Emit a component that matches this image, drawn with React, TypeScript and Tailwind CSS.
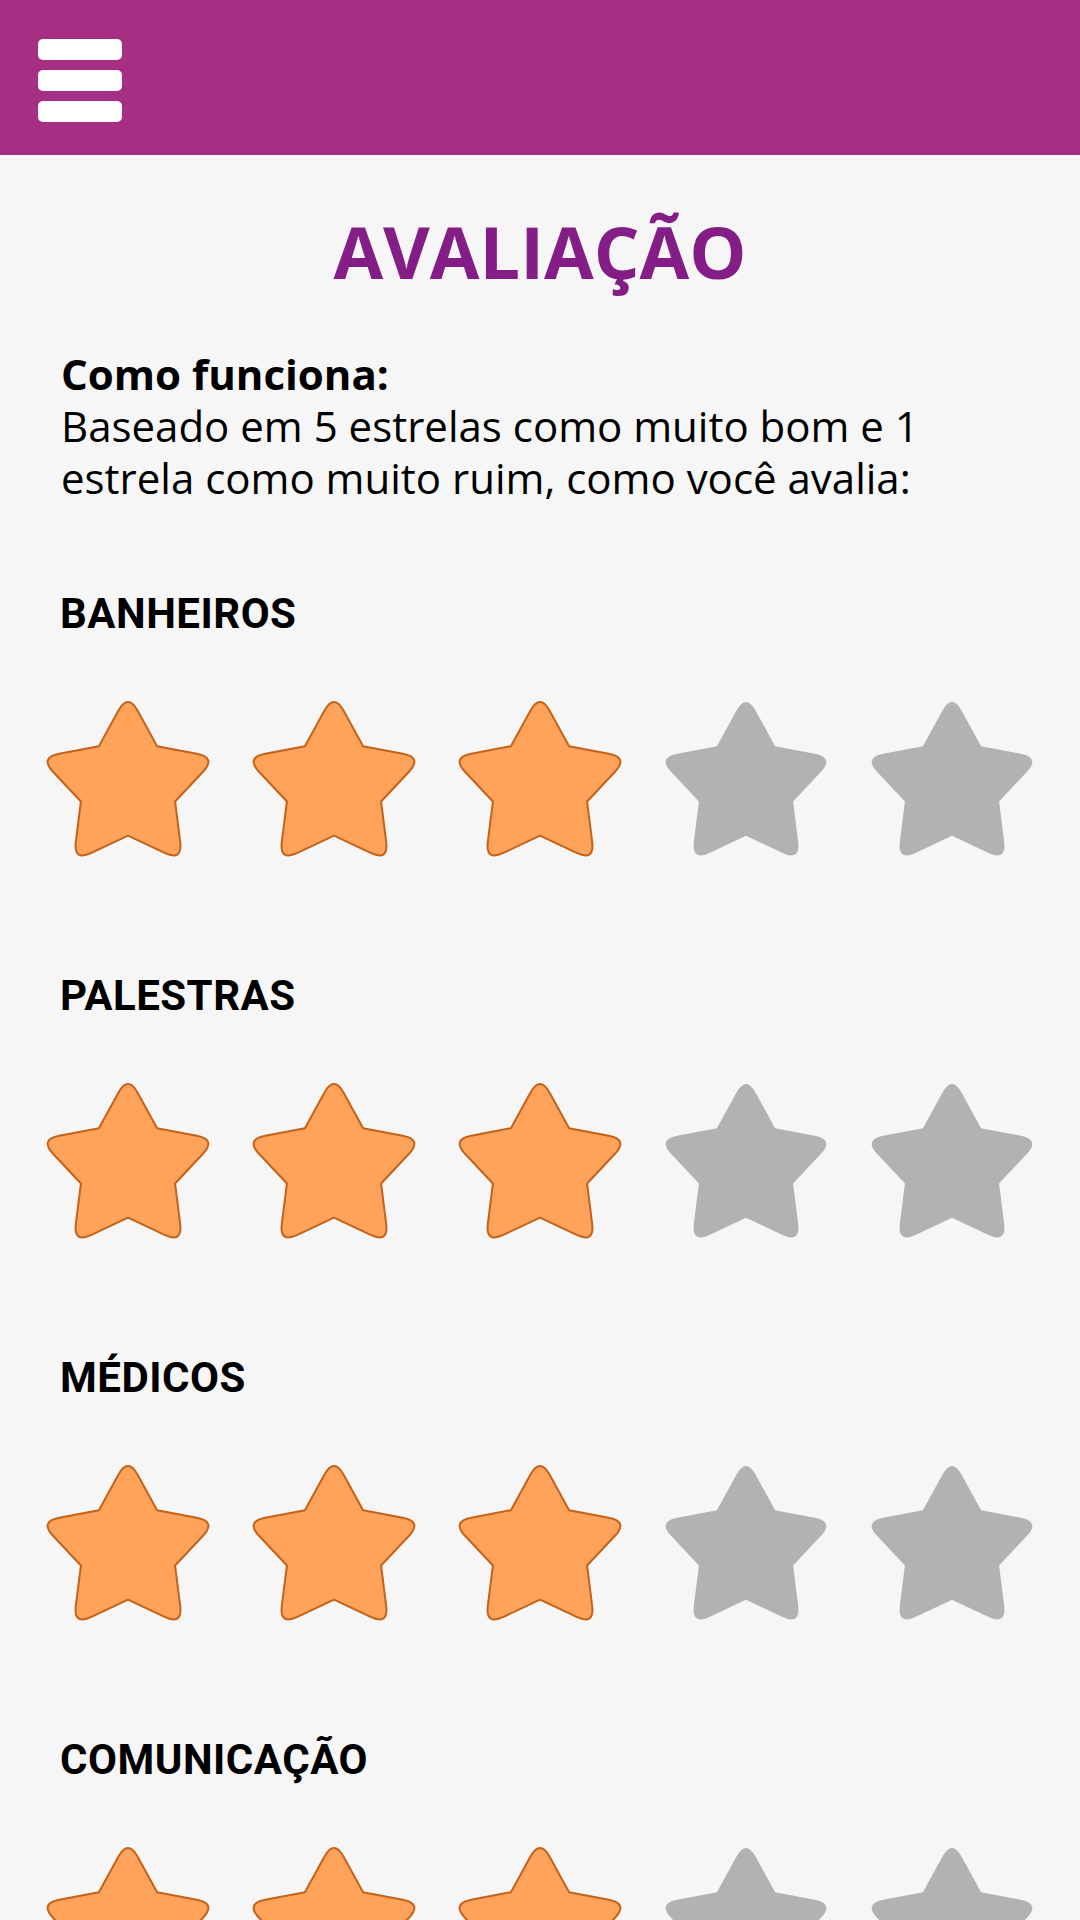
import React from "react";

// gera o caminho de uma estrela com pontas arredondadas
function starPath(cx: number, cy: number, R: number, r: number, round: number) {
  const pts: [number, number][] = [];
  for (let i = 0; i < 10; i++) {
    const ang = ((-90 + i * 36) * Math.PI) / 180;
    const rad = i % 2 === 0 ? R : r;
    pts.push([cx + rad * Math.cos(ang), cy + rad * Math.sin(ang)]);
  }
  const f = (n: number) => n.toFixed(2);
  let d = "";
  for (let i = 0; i < 10; i++) {
    const p = pts[i];
    if (i % 2 === 0) {
      const prev = pts[(i + 9) % 10];
      const next = pts[(i + 1) % 10];
      const len = Math.hypot(p[0] - prev[0], p[1] - prev[1]);
      const t = round / len;
      const a = [p[0] + (prev[0] - p[0]) * t, p[1] + (prev[1] - p[1]) * t];
      const b = [p[0] + (next[0] - p[0]) * t, p[1] + (next[1] - p[1]) * t];
      d += `${i === 0 ? "M" : "L"}${f(a[0])} ${f(a[1])} Q${f(p[0])} ${f(p[1])} ${f(b[0])} ${f(b[1])} `;
    } else {
      d += `L${f(p[0])} ${f(p[1])} `;
    }
  }
  return d + "Z";
}

const STAR = starPath(80, 84.2, 93, 49.5, 20);

function Star({ filled }: { filled: boolean }) {
  return (
    <svg width="160" height="152" viewBox="0 0 160 152" className="overflow-visible">
      {filled ? (
        <path d={STAR} fill="#ffa25a" stroke="#c4621a" strokeWidth="2" strokeLinejoin="round" />
      ) : (
        <path d={STAR} fill="#b2b2b2" />
      )}
    </svg>
  );
}

const categorias = [
  { nome: "BANHEIROS", nota: 3 },
  { nome: "PALESTRAS", nota: 3 },
  { nome: "MÉDICOS", nota: 3 },
  { nome: "COMUNICAÇÃO", nota: 3 },
];

export default function App() {
  return (
    <div className="w-[1080px] h-[1920px] overflow-hidden bg-[#f6f6f6]">
      {/* Barra superior */}
      <div className="h-[155px] bg-[#a72f83] pt-[39px] pl-[38px]">
        <div className="flex flex-col gap-[10px] w-[84px]">
          <div className="h-[21px] rounded-[5px] bg-white" />
          <div className="h-[21px] rounded-[5px] bg-white" />
          <div className="h-[21px] rounded-[5px] bg-white" />
        </div>
      </div>

      <h1
        className="mt-[60px] text-center text-[72px] leading-[72px] font-bold text-[#841e86]"
        style={{ fontFamily: '"Open Sans", sans-serif' }}
      >
        AVALIAÇÃO
      </h1>

      <div
        className="mt-[61px] px-[61px] text-[42px] leading-[52px] text-black"
        style={{ fontFamily: '"Open Sans", sans-serif' }}
      >
        <p className="font-bold">Como funciona:</p>
        <p>Baseado em 5 estrelas como muito bom e 1 estrela como muito ruim, como você avalia:</p>
      </div>

      <div className="mt-[89px]">
        {categorias.map((c) => (
          <div key={c.nome} className="pb-[121px]">
            <h2
              className="px-[60px] text-[42px] leading-[42px] font-bold tracking-[0.5px] text-black"
              style={{ fontFamily: "Roboto, sans-serif" }}
            >
              {c.nome}
            </h2>
            <div className="mt-[67px] px-[48px] flex justify-between">
              {[1, 2, 3, 4, 5].map((n) => (
                <Star key={n} filled={n <= c.nota} />
              ))}
            </div>
          </div>
        ))}
      </div>
    </div>
  );
}
